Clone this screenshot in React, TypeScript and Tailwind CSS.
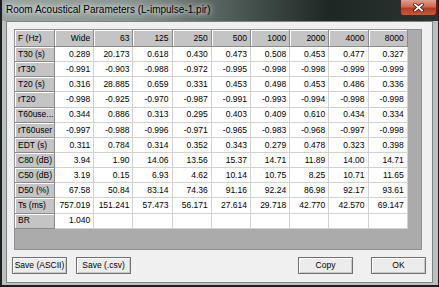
import React from 'react';

const header = ['F (Hz)', 'Wide', '63', '125', '250', '500', '1000', '2000', '4000', '8000'];

const rows: string[][] = [
  ['T30 (s)', '0.289', '20.173', '0.618', '0.430', '0.473', '0.508', '0.453', '0.477', '0.327'],
  ['rT30', '-0.991', '-0.903', '-0.988', '-0.972', '-0.995', '-0.998', '-0.998', '-0.999', '-0.999'],
  ['T20 (s)', '0.316', '28.885', '0.659', '0.331', '0.453', '0.498', '0.453', '0.486', '0.336'],
  ['rT20', '-0.998', '-0.925', '-0.970', '-0.987', '-0.991', '-0.993', '-0.994', '-0.998', '-0.998'],
  ['T60use...', '0.344', '0.886', '0.313', '0.295', '0.403', '0.409', '0.610', '0.434', '0.334'],
  ['rT60user', '-0.997', '-0.988', '-0.996', '-0.971', '-0.965', '-0.983', '-0.968', '-0.997', '-0.998'],
  ['EDT (s)', '0.311', '0.784', '0.314', '0.352', '0.343', '0.279', '0.478', '0.323', '0.398'],
  ['C80 (dB)', '3.94', '1.90', '14.06', '13.56', '15.37', '14.71', '11.89', '14.00', '14.71'],
  ['C50 (dB)', '3.19', '0.15', '6.93', '4.62', '10.14', '10.75', '8.25', '10.71', '11.65'],
  ['D50 (%)', '67.58', '50.84', '83.14', '74.36', '91.16', '92.24', '86.98', '92.17', '93.61'],
  ['Ts (ms)', '757.019', '151.241', '57.473', '56.171', '27.614', '29.718', '42.770', '42.570', '69.147'],
  ['BR', '1.040', '', '', '', '', '', '', '', ''],
];

const headCell =
  'bg-[#c4c4c4] border-r border-b border-[#8a8a8a] shadow-[inset_1px_1px_0_#ffffff] flex items-center overflow-hidden whitespace-nowrap';
const dataCell =
  'bg-white border-r border-b border-[#d2d2d2] flex items-center justify-end pr-[3px] whitespace-nowrap';

function WinButton({ label }: { label: string }) {
  return (
    <button className="w-[55px] h-[17px] bg-[#ececec] border border-[#707070] shadow-[inset_1px_1px_0_#ffffff,inset_-1px_-1px_0_#c8c8c8] text-[8.5px] text-black leading-none flex items-center justify-center">
      {label}
    </button>
  );
}

export default function App() {
  return (
    <div
      className="w-[439px] h-[287px] flex flex-col border-l-2 border-r border-b-2 border-[#1b201f] bg-[#b9c0bf] overflow-hidden"
      style={{ fontFamily: '"Liberation Sans", Arial, sans-serif' }}
    >
      {/* title bar */}
      <div className="h-[21px] shrink-0 flex items-start bg-[linear-gradient(90deg,#9aa49f_0%,#87938e_30%,#4a5652_55%,#1d2724_75%,#2a3430_100%)]">
        <span className="pl-[4px] pt-[5px] text-[10px] leading-none text-black [text-shadow:0_0_5px_#ffffff,0_0_8px_#ffffff]">
          Room Acoustical Parameters (L-impulse-1.pir)
        </span>
        <div className="ml-auto mr-[1px] w-[37px] h-[16px] rounded-b-[4px] border border-t-0 border-[#5a2018] bg-[linear-gradient(180deg,#e0a090_0%,#cf6a50_45%,#b53a22_55%,#c85a3a_100%)] flex items-center justify-center">
          <svg width="11" height="9" viewBox="0 0 11 9">
            <path d="M2 1.5 L9 7.5 M9 1.5 L2 7.5" stroke="#4a1008" strokeWidth="3.4" strokeLinecap="square" />
            <path d="M2 1.5 L9 7.5 M9 1.5 L2 7.5" stroke="#ffffff" strokeWidth="1.8" strokeLinecap="square" />
          </svg>
        </div>
      </div>

      {/* client area */}
      <div className="flex-1 flex pl-[4px] pr-[5px] pb-[2px]">
        <div className="flex-1 flex flex-col bg-[#f0f0f0] border border-[#7c8584]">
          <div className="mt-[7px] ml-[7px] w-[408px] h-[221px] border border-[#8e8e8e] bg-[#ababab] text-[8.5px] text-black leading-none">
            <div className="grid grid-cols-[40px_repeat(9,39.2px)] grid-rows-[17px_repeat(12,15.15px)]">
              {header.map((h, i) => (
                <div key={h} className={`${headCell} ${i === 0 ? 'justify-start pl-[3px]' : 'justify-end pr-[3px]'}`}>
                  {h}
                </div>
              ))}
              {rows.map((r) =>
                r.map((v, i) =>
                  i === 0 ? (
                    <div key={r[0] + i} className={`${headCell} justify-start pl-[3px]`}>
                      {v}
                    </div>
                  ) : (
                    <div key={r[0] + i} className={dataCell}>
                      {v}
                    </div>
                  )
                )
              )}
            </div>
          </div>

          <div className="mt-[7px] ml-[5px] mr-[6px] flex items-center">
            <WinButton label="Save (ASCII)" />
            <div className="ml-[9px]">
              <WinButton label="Save (.csv)" />
            </div>
            <div className="ml-auto flex gap-[18px]">
              <WinButton label="Copy" />
              <WinButton label="OK" />
            </div>
          </div>
        </div>
      </div>
    </div>
  );
}
